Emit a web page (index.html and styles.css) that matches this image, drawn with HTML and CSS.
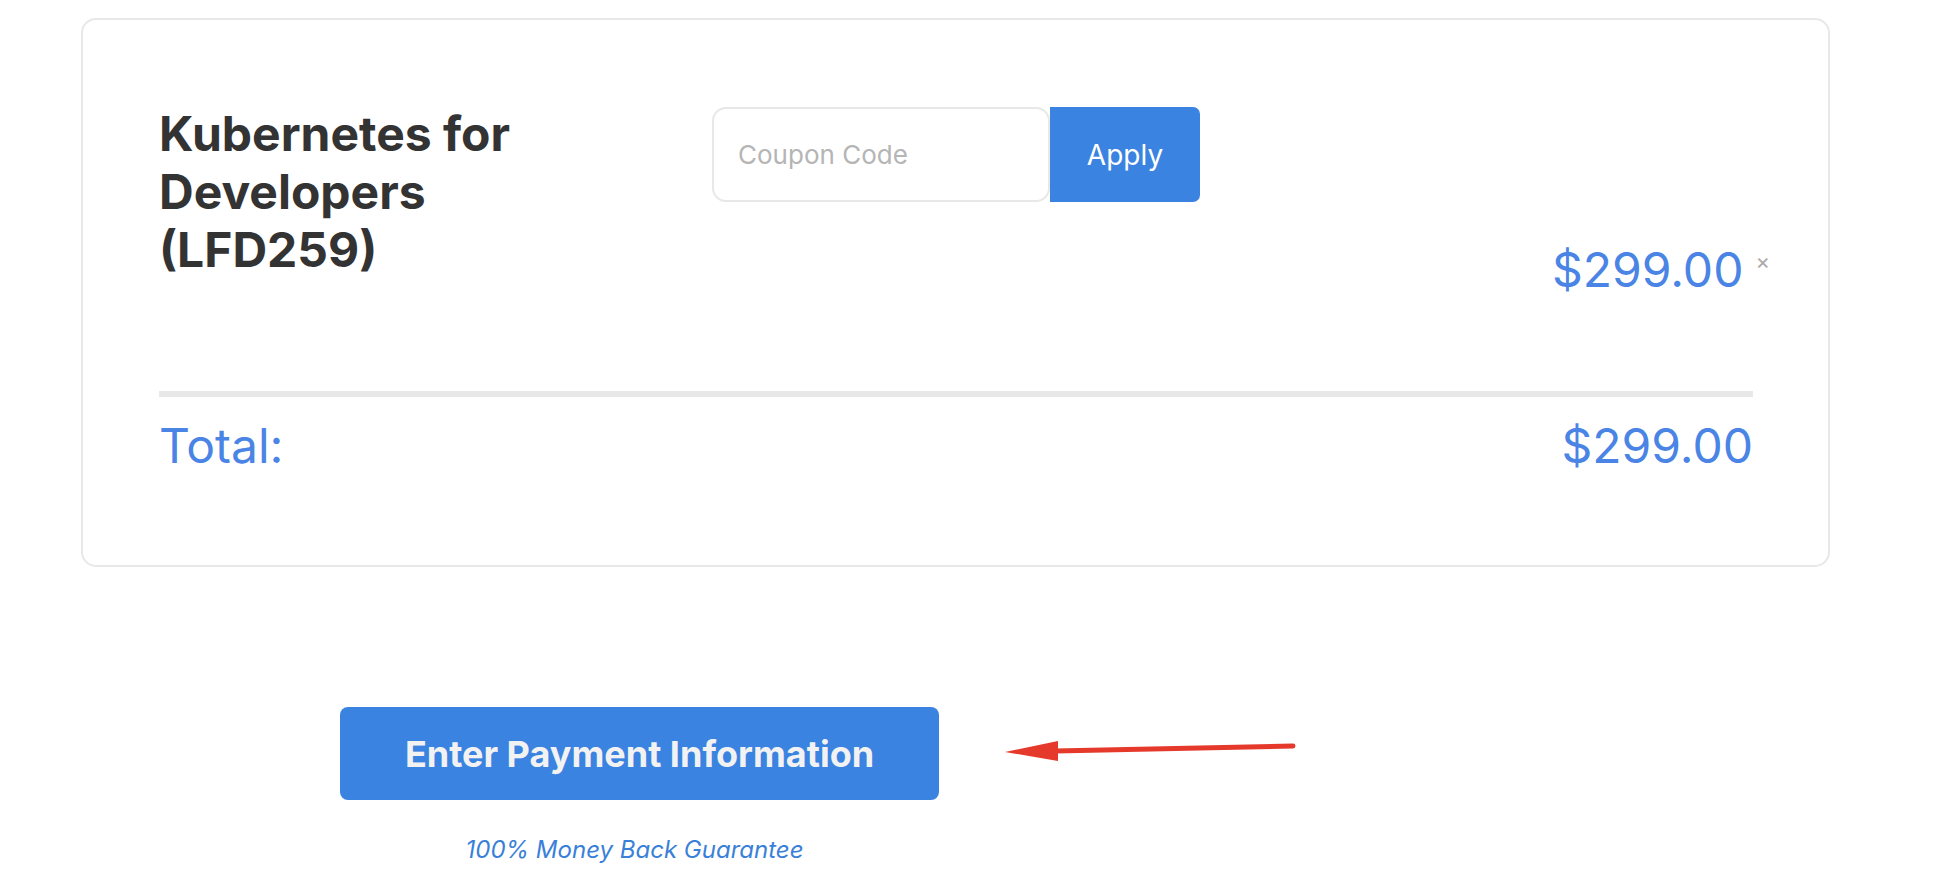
FILE: index.html
```html
<html>

<head>
    <link rel="stylesheet" href="styles.css">
</head>

<body>
    <div class="page">
        <div class="cart">
            <div class="cart-top">
                <div class="course">
                    <h1 class="course-title">Kubernetes for Developers (LFD259)</h1>
                </div>
                <div class="cart-side">
                    <form class="coupon" onsubmit="return false">
                        <input class="coupon-input" type="text" placeholder="Coupon Code">
                        <button class="coupon-btn">Apply</button>
                    </form>
                    <div class="line-price">
                        <span class="price">$299.00</span>
                        <button class="remove">&times;</button>
                    </div>
                </div>
            </div>
            <div class="divider"></div>
            <div class="total-row">
                <span>Total:</span>
                <span>$299.00</span>
            </div>
        </div>

        <div class="checkout">
            <button class="pay-btn">Enter Payment Information</button>
            <p class="guarantee">100% Money Back Guarantee</p>
        </div>

        <!-- annotation arrow pointing at the button -->
        <svg class="arrow" width="300" height="30" viewBox="0 0 300 30">
            <line x1="288" y1="7" x2="50" y2="12" stroke="#e5392b" stroke-width="5" stroke-linecap="round" />
            <polygon points="0,13 53,2 53,22" fill="#e5392b" />
        </svg>
    </div>
</body>

</html>
```

FILE: styles.css
```css
body {
    margin: 0;
    background: #fff;
    font-family: Inter, "Noto Sans", sans-serif;
}

.page {
    position: relative;
    min-height: 876px;
    padding-top: 18px;
}

.cart {
    box-sizing: border-box;
    width: 1749px;
    margin-left: 81px;
    padding: 85px 75px 90px 76px;
    border: 2px solid #e8e8e8;
    border-radius: 15px;
}

.cart-top {
    display: flex;
}

.course {
    flex: 0 0 553px;
}

.course-title {
    width: 420px;
    margin: 0;
    font-size: 48px;
    line-height: 58px;
    font-weight: 700;
    color: #333;
}

.cart-side {
    flex: 1;
    display: flex;
    flex-direction: column;
}

.coupon {
    display: flex;
    margin: 2px 0 0 0;
}

.coupon-input {
    box-sizing: border-box;
    width: 338px;
    height: 95px;
    padding: 0 24px;
    border: 2px solid #e8e8e8;
    border-radius: 14px;
    font-family: Inter, sans-serif;
    font-size: 26px;
    color: #333;
    outline: none;
}

.coupon-input::placeholder {
    color: #b5b5b5;
}

.coupon-btn {
    width: 150px;
    height: 95px;
    border: none;
    border-radius: 0 7px 7px 0;
    background: #3b83e0;
    color: #fff;
    font-family: Inter, sans-serif;
    font-size: 28px;
}

.line-price {
    display: flex;
    justify-content: flex-end;
    align-items: flex-start;
    margin: 38px -17px 0 0;
}

.price {
    font-size: 48px;
    color: #4a84e5;
}

.remove {
    margin: 10px 0 0 12px;
    padding: 0;
    border: none;
    background: none;
    font-family: Inter, sans-serif;
    font-size: 22px;
    line-height: 1;
    color: #aaa;
}

.divider {
    height: 6px;
    margin-top: 92px;
    background: #e8e8e8;
}

.total-row {
    display: flex;
    justify-content: space-between;
    margin-top: 19px;
    font-size: 48px;
    color: #4a84e5;
}

.checkout {
    width: 599px;
    margin: 140px 0 0 340px;
    text-align: center;
}

.pay-btn {
    width: 599px;
    height: 93px;
    border: none;
    border-radius: 8px;
    background: #3b83e0;
    color: #f2f2f2;
    font-family: Inter, sans-serif;
    font-size: 36px;
    font-weight: 700;
}

.guarantee {
    margin: 35px 10px 0 0;
    font-size: 24px;
    font-style: italic;
    color: #3a7fd8;
}

.arrow {
    position: absolute;
    left: 1005px;
    top: 739px;
}
```
